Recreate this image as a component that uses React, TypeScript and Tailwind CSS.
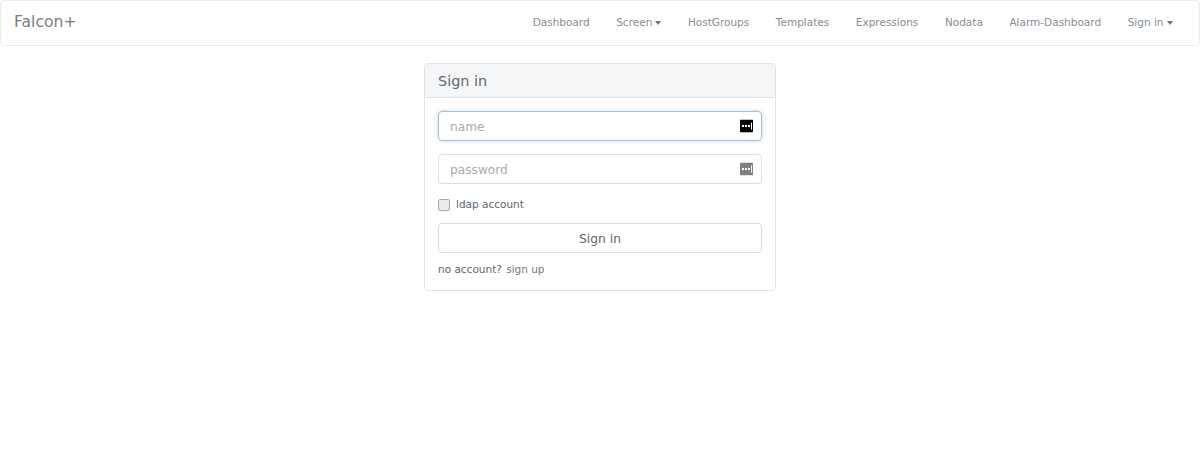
import React from "react";

function Caret() {
  return <span className="ml-[3px] inline-block w-0 h-0 align-middle border-x-[3.5px] border-x-transparent border-t-[4px] border-t-[#6b7280]" />;
}

function KeyIcon({ dark }: { dark?: boolean }) {
  return (
    <svg width="13" height="13" viewBox="0 0 13 13" className="absolute right-[8px] top-1/2 -translate-y-1/2">
      <rect x="0" y="0" width="13" height="13" rx="1" fill={dark ? "#000000" : "#808080"} />
      <rect x="2" y="5.5" width="2" height="2" fill="#fff" />
      <rect x="5" y="5.5" width="2" height="2" fill="#fff" />
      <rect x="8" y="5.5" width="2" height="2" fill="#fff" />
      <rect x="11" y="3" width="1" height="7" fill="#fff" />
    </svg>
  );
}

const links = ["Dashboard", "Screen", "HostGroups", "Templates", "Expressions", "Nodata", "Alarm-Dashboard", "Sign in"];

export default function App() {
  return (
    <div className="min-h-[474px] bg-white font-['DejaVu_Sans',sans-serif] text-[#555b61]">
      <nav className="h-[46px] border border-[#eaebec] rounded-[4px] flex items-center justify-between pl-[13px] pr-[26.5px]">
        <span className="text-[15.6px] text-[#7a7d80]">Falcon+</span>
        <ul className="flex items-center gap-[26.6px] text-[10.5px] text-[#868c92]">
          {links.map((l) => (
            <li key={l} className="flex items-center">
              {l}
              {(l === "Screen" || l === "Sign in") && <Caret />}
            </li>
          ))}
        </ul>
      </nav>

      <div className="flex justify-center mt-[17px]">
        <div className="w-[352px] h-[228px] border border-[#dfe1e4] rounded-[4px]">
          <div className="h-[34px] bg-[#f5f6f8] border-b border-[#e2e4e7] rounded-t-[3px] flex items-center pl-[13px] pt-[3px] text-[14.4px] text-[#62676c]">
            Sign in
          </div>
          <div className="px-[13px] pt-[13px] flex flex-col">
            <div className="relative h-[30px] border border-[#a9bfd0] rounded-[4px] shadow-[0_0_4px_rgba(130,170,205,0.45)] flex items-center pl-[11px] pt-[2px] text-[12.2px] text-[#a6abb0]">
              name
              <KeyIcon dark />
            </div>
            <div className="relative h-[30px] mt-[13px] border border-[#dcdfe3] rounded-[4px] flex items-center pl-[11px] pt-[2px] text-[12.2px] text-[#a6abb0]">
              password
              <KeyIcon />
            </div>
            <label className="mt-[15px] h-[12px] flex items-center text-[10.5px] text-[#5f6469]">
              <span className="w-[12px] h-[12px] rounded-[2px] border border-[#a3a8ad] bg-[#e9ebee] mr-[6px]" />
              ldap account
            </label>
            <div className="mt-[12px] h-[30px] border border-[#d8dbdf] rounded-[4px] flex items-center justify-center pt-[2px] text-[12.3px] text-[#62676c]">
              Sign in
            </div>
            <div className="mt-[10px] text-[10.5px] leading-[13px] text-[#5f6469]">
              no account? <span className="ml-[1px] text-[#74797e]">sign up</span>
            </div>
          </div>
        </div>
      </div>
    </div>
  );
}
